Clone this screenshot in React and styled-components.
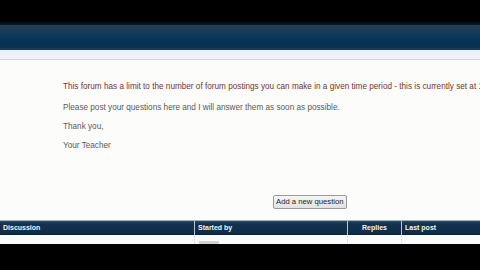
import React from "react";
import styled, { createGlobalStyle } from "styled-components";

const Global = createGlobalStyle`
  html, body { margin: 0; padding: 0; background: #000; }
  body { width: 480px; height: 270px; overflow: hidden; font-family: "Liberation Sans", Arial, sans-serif; }
`;

const Page = styled.div`
  width: 480px;
  height: 270px;
  display: flex;
  flex-direction: column;
  background: #000;
`;

const TopBlack = styled.div`
  height: 25px;
  flex: none;
  background: linear-gradient(#000 0, #000 21px, #0d1620 24px, #0d1620 25px);
`;

const Banner = styled.div`
  height: 25px;
  flex: none;
  background: linear-gradient(#21405a 0px, #163a5a 8px, #04345a 16px, #05325a 18px, #0b2c47 19px, #05345a 20px, #0e2f4d 22px, #1b3a55 24px, #203f5a 25px);
`;

const SubStrip = styled.div`
  height: 9px;
  flex: none;
  background: linear-gradient(#e8f0f6, #f3f3f8);
  border-bottom: 1px solid #d4d4d4;
`;

const Content = styled.div`
  flex: none;
  height: 160px;
  background: #fcfcfa;
  display: flex;
  flex-direction: column;
  padding: 22px 0 0 63px;
  box-sizing: border-box;
  overflow: hidden;
`;

const Para = styled.p`
  margin: 0 0 ${(p) => p.$gap}px 0;
  font-size: 8.2px;
  line-height: 10px;
  white-space: nowrap;
  color: ${(p) => p.$color || "#5a5a5a"};
`;

const ButtonRow = styled.div`
  display: flex;
  justify-content: flex-start;
  padding-left: 210px;
  margin-top: 44px;
`;

const Button = styled.button`
  font-family: "Liberation Sans", Arial, sans-serif;
  font-size: 7.7px;
  line-height: 10px;
  color: #222;
  background: linear-gradient(#f6f6f6, #e2e2e2);
  border: 1px solid #9a9a9a;
  border-radius: 2px;
  padding: 1px 2px;
  height: 14px;
  white-space: nowrap;
`;

const TableHead = styled.div`
  flex: none;
  height: 14px;
  display: grid;
  grid-template-columns: 194px 153px 54px 1fr;
  background: linear-gradient(#2a4a66 0px, #14314d 3px, #0f2c48 12px, #0a223a 14px);
  border-top: 1px solid #9bb3c7;
`;

const HeadCell = styled.div`
  font-size: 7px;
  font-weight: bold;
  color: #f2f4f8;
  line-height: 14px;
  padding-left: ${(p) => (p.$center ? 0 : 3)}px;
  text-align: ${(p) => (p.$center ? "center" : "left")};
  border-left: ${(p) => (p.$first ? "none" : "1px solid #b8c8d6")};
  white-space: nowrap;
  overflow: hidden;
`;

const BodyRow = styled.div`
  flex: none;
  height: 9px;
  background: #fafbfc;
  display: grid;
  grid-template-columns: 194px 153px 54px 1fr;
`;

const BodyCell = styled.div`
  border-left: ${(p) => (p.$first ? "none" : "1px solid #e4e4e4")};
  display: flex;
  align-items: flex-end;
  padding-left: 4px;
`;

const Pager = styled.div`
  width: 20px;
  height: 3px;
  background: #d2d2d2;
`;

const Bottom = styled.div`
  flex: 1;
  background: #000;
`;

export default function App() {
  return (
    <>
      <Global />
      <Page>
        <TopBlack />
        <Banner />
        <SubStrip />
        <Content>
          <Para $gap={11} $color="#733333">
            This forum has a limit to the number of forum postings you can make in a given time period - this is currently set at 1
          </Para>
          <Para $gap={9}>Please post your questions here and I will answer them as soon as possible.</Para>
          <Para $gap={9}>Thank you,</Para>
          <Para $gap={0}>Your Teacher</Para>
          <ButtonRow>
            <Button>Add a new question</Button>
          </ButtonRow>
        </Content>
        <TableHead>
          <HeadCell $first>Discussion</HeadCell>
          <HeadCell>Started by</HeadCell>
          <HeadCell $center>Replies</HeadCell>
          <HeadCell>Last post</HeadCell>
        </TableHead>
        <BodyRow>
          <BodyCell $first />
          <BodyCell>
            <Pager />
          </BodyCell>
          <BodyCell />
          <BodyCell />
        </BodyRow>
        <Bottom />
      </Page>
    </>
  );
}
